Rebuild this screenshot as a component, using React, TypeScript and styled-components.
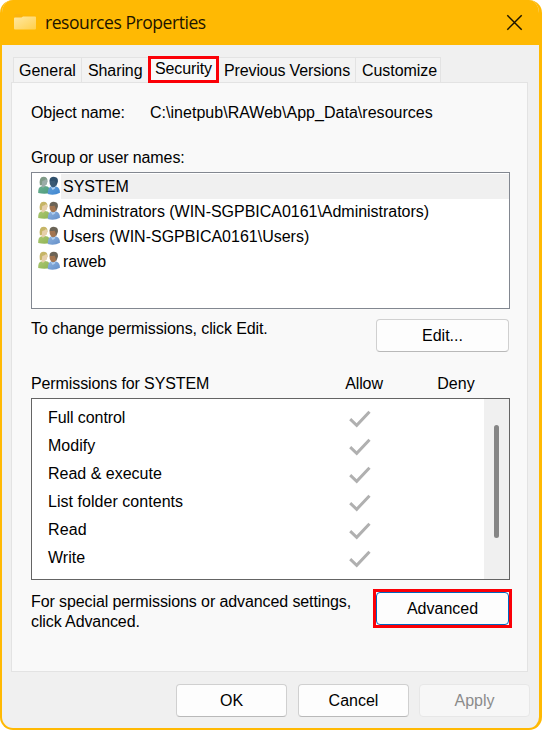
import React from "react";
import styled, { createGlobalStyle } from "styled-components";

const GlobalStyle = createGlobalStyle`
  * { box-sizing: border-box; }
  body { margin: 0; background: #fff; }
`;

const Dialog = styled.div`
  width: 542px;
  height: 730px;
  display: flex;
  flex-direction: column;
  border: solid #ffb903;
  border-width: 0 3px 2px 2px;
  border-radius: 13px;
  background: #f0f0f0;
  overflow: hidden;
  font: 16px/20px "Liberation Sans", Arial, sans-serif;
  color: #000;
`;

const TitleBar = styled.header`
  height: 45px;
  flex: none;
  display: flex;
  align-items: center;
  padding: 0 16px 0 11px;
  background: #ffb903;
`;

const Title = styled.h1<{ $track: number }>`
  flex: 1;
  margin: 0 0 1px 8px;
  font: 400 17.5px/24px "Open Sans", "Noto Sans", sans-serif;
  letter-spacing: ${(p) => p.$track}px;
  color: #1c1400;
`;

const CloseButton = styled.button`
  display: flex;
  padding: 0;
  border: 0;
  background: none;
`;

const Text = styled.span<{ $track?: number }>`
  white-space: pre;
  letter-spacing: ${(p) => p.$track ?? 0}px;
`;

const Tabs = styled.nav`
  height: 37px;
  flex: none;
  display: flex;
  align-items: flex-end;
  padding-left: 11px;
`;

const Tab = styled.div<{ $width: number; $inset: number; $first?: boolean }>`
  width: ${(p) => p.$width}px;
  height: 25px;
  padding: 3px 0 0 ${(p) => p.$inset}px;
  border-top: 1px solid #e3e3e3;
  border-right: 1px solid #e3e3e3;
  border-left: ${(p) => (p.$first ? "1px solid #e3e3e3" : "0")};
  background: #f3f3f3;
`;

const ActiveTab = styled.div`
  position: relative;
  z-index: 1;
  width: 71px;
  height: 27px;
  margin: 0 0 -1px -1px;
  padding-left: 4px;
  border: 3px solid #fb0007;
  background: #f9f9f9;
`;

const Page = styled.main`
  width: 517px;
  height: 590px;
  flex: none;
  margin-left: 9px;
  padding: 20px 17px 0 19px;
  border: 1px solid #e3e3e3;
  background: #f9f9f9;
`;

const ObjectRow = styled.div`
  display: flex;
  height: 45px;
`;

const ObjectLabel = styled.div`
  width: 119px;
`;

const GroupLabel = styled.div`
  height: 24px;
`;

const UserList = styled.ul`
  height: 137px;
  margin: 0;
  padding: 1px 0 0 6px;
  list-style: none;
  border: 1px solid #828790;
  background: #fff;
`;

const UserRow = styled.li`
  display: flex;
  height: 25px;
`;

const UserName = styled.div<{ $selected?: boolean }>`
  flex: 1;
  margin-left: 1px;
  padding: 3px 0 0 2px;
  background: ${(p) => (p.$selected ? "#f0f0f0" : "transparent")};
`;

const EditRow = styled.div`
  display: flex;
  justify-content: space-between;
  height: 65px;
  padding: 10px 1px 0 0;
`;

const Button = styled.button<{ $width: number; $focus?: boolean }>`
  width: ${(p) => p.$width}px;
  height: 33px;
  flex: none;
  padding: 0;
  border: 1px solid ${(p) => (p.$focus ? "#0067c0" : "#d0d0d0")};
  border-bottom-color: ${(p) => (p.$focus ? "#0067c0" : "#b9b9b9")};
  border-radius: 4px;
  background: #fdfdfd;
  color: #000;
  font: inherit;

  &:disabled {
    border-color: #e7e7e7;
    background: #f7f7f7;
    color: #8b8b8b;
  }
`;

const ColumnHeads = styled.div`
  display: grid;
  grid-template-columns: 286px 94px 90px;
  height: 24px;
`;

const Head = styled.div<{ $center?: boolean }>`
  text-align: ${(p) => (p.$center ? "center" : "left")};
`;

const PermissionBox = styled.div`
  display: flex;
  height: 182px;
  border: 1px solid #646464;
  background: #fff;
`;

const PermissionList = styled.div`
  flex: 1;
  padding: 9px 0 0 16px;
`;

const Permission = styled.div`
  display: grid;
  grid-template-columns: 300px 24px;
  height: 28px;
`;

const ScrollTrack = styled.div`
  width: 25px;
  padding: 26px 10px 0;
  background: #f0f0f0;
`;

const ScrollThumb = styled.div`
  width: 5px;
  height: 113px;
  border-radius: 3px;
  background: #868686;
`;

const AdvancedRow = styled.div`
  display: flex;
  justify-content: space-between;
  align-items: flex-start;
  margin-right: -2px;
  padding-top: 9px;
`;

const Hint = styled.div`
  padding-top: 3px;
  display: flex;
  flex-direction: column;
`;

const Highlight = styled.div`
  display: flex;
  border: 3px solid #fb0007;
  background: #fff;
`;

const Footer = styled.footer`
  display: grid;
  grid-template-columns: 122px 121px 111px;
  justify-content: end;
  padding: 12px 9px 0 0;
`;

const FolderIcon = () => (
  <svg width="24" height="20" viewBox="0 0 24 20">
    <defs>
      <linearGradient id="folder" x1="0" y1="0" x2="1" y2="1">
        <stop offset="0" stopColor="#ffe8a2" />
        <stop offset="1" stopColor="#ffcf4b" />
      </linearGradient>
    </defs>
    <path d="M1.500 5V2q0-1 1-1h5.500l2 1.500h11q1 0 1 1V9h-20.500z" fill="#fcb40a" />
    <path d="M1 5.500q0-1 1-1h6.500l1.500-1h12q1 0 1 1V15.500q0 1-1 1H2q-1 0-1-1z" fill="url(#folder)" />
  </svg>
);

const UsersIcon = ({ tinted, id }: { tinted?: boolean; id: string }) => {
  const hair = tinted ? "#7f9a86" : "#c6b566";
  const face = tinted ? "#9aaca8" : "#e6cfab";
  const darkHair = tinted ? "#30506c" : "#6b6457";
  const darkFace = tinted ? "#3b5a74" : "#a37550";
  return (
    <svg width="22" height="24" viewBox="0 0 22 24">
      <defs>
        <linearGradient id={`${id}-green`} x1="0" y1="0" x2="1" y2="1">
          <stop offset="0" stopColor={tinted ? "#6cb092" : "#abc873"} />
          <stop offset="1" stopColor={tinted ? "#4c9b7c" : "#8fb353"} />
        </linearGradient>
        <linearGradient id={`${id}-blue`} x1="0" y1="0" x2="1" y2="1">
          <stop offset="0" stopColor={tinted ? "#62a0da" : "#8fb4df"} />
          <stop offset="1" stopColor={tinted ? "#3f86d0" : "#648fc9"} />
        </linearGradient>
      </defs>
      <path d="M.2 19q-.2-5.300 2.300-6.300l3-1 4 .8q2.500 1.200 2.500 6.500-5.500 1.500-11.800 0z" fill={`url(#${id}-green)`} />
      <path d="M2 11.300Q.5 2.800 5.500 2.800q4.300 0 4 4.700l-1.500 3.500z" fill={hair} />
      <path d="M4.300 7q2.500-.3 3.700-1.900 1.500.9 1.200 3.400-.7 3.300-2.400 3.300v1l-2 1-1.300-1.300z" fill={face} />
      <path d="M9.800 20q-.1-5.500 2.200-7l3-1.200 3.800 1q3 1.200 3.200 6-6 3-12.200 1.200z" fill={`url(#${id}-blue)`} />
      <path d="M11.500 6.500Q11.800 2.800 15.700 2.800q4.800.2 4.200 5l-1.500 4-5-1z" fill={darkHair} />
      <path d="M11.500 7q3 .3 5-.5l1 2 .5 3-1.700 1.800-3-.6Q11.200 11 11.500 7z" fill={darkFace} />
      <path d="M12.200 12.300l2.500 1.500 2.500-1v1.400l-2.500 1.800z" fill="#b4d0ef" />
    </svg>
  );
};

const CheckIcon = () => (
  <svg width="24" height="22" viewBox="0 0 24 22">
    <path d="M2.200 11.200 8.700 17.300 21.500 3.700" fill="none" stroke="#b0b0b0" strokeWidth="3" />
  </svg>
);

const users = [
  { name: "SYSTEM", track: 0 },
  { name: "Administrators (WIN-SGPBICA0161\\Administrators)", track: -0.025 },
  { name: "Users (WIN-SGPBICA0161\\Users)", track: 0 },
  { name: "raweb", track: -0.1 },
];

const permissions = [
  { name: "Full control", track: -0.08 },
  { name: "Modify", track: 0 },
  { name: "Read & execute", track: 0 },
  { name: "List folder contents", track: 0.04 },
  { name: "Read", track: 0.1 },
  { name: "Write", track: 0 },
];

export default function App() {
  return (
    <>
      <GlobalStyle />
      <Dialog>
        <TitleBar>
          <FolderIcon />
          <Title $track={-0.44}>resources Properties</Title>
          <CloseButton aria-label="Close">
            <svg width="17" height="17" viewBox="0 0 17 17">
              <path d="M1.300 1.300 15.700 15.700M15.700 1.300 1.300 15.700" stroke="#1c1400" strokeWidth="1.500" fill="none" />
            </svg>
          </CloseButton>
        </TitleBar>
        <Tabs>
          <Tab $width={69} $inset={5} $first><Text>General</Text></Tab>
          <Tab $width={67} $inset={6}><Text $track={-0.1}>Sharing</Text></Tab>
          <ActiveTab><Text $track={-0.1}>Security</Text></ActiveTab>
          <Tab $width={137} $inset={5}><Text $track={-0.12}>Previous Versions</Text></Tab>
          <Tab $width={85} $inset={6}><Text $track={-0.05}>Customize</Text></Tab>
        </Tabs>
        <Page>
          <ObjectRow>
            <ObjectLabel><Text $track={-0.1}>Object name:</Text></ObjectLabel>
            <Text $track={0.025}>{"C:\\inetpub\\RAWeb\\App_Data\\resources"}</Text>
          </ObjectRow>
          <GroupLabel><Text $track={-0.1}>Group or user names:</Text></GroupLabel>
          <UserList>
            {users.map((user, i) => (
              <UserRow key={user.name}>
                <UsersIcon id={`user${i}`} tinted={i === 0} />
                <UserName $selected={i === 0}><Text $track={user.track}>{user.name}</Text></UserName>
              </UserRow>
            ))}
          </UserList>
          <EditRow>
            <Text $track={-0.1}>To change permissions, click Edit.</Text>
            <Button $width={133}>Edit...</Button>
          </EditRow>
          <ColumnHeads>
            <Head><Text $track={-0.1}>Permissions for SYSTEM</Text></Head>
            <Head $center><Text $track={-0.1}>Allow</Text></Head>
            <Head $center>Deny</Head>
          </ColumnHeads>
          <PermissionBox>
            <PermissionList>
              {permissions.map(({ name, track }) => (
                <Permission key={name}>
                  <Text $track={track}>{name}</Text>
                  <CheckIcon />
                </Permission>
              ))}
            </PermissionList>
            <ScrollTrack><ScrollThumb /></ScrollTrack>
          </PermissionBox>
          <AdvancedRow>
            <Hint>
              <Text $track={-0.1}>For special permissions or advanced settings,</Text>
              <Text $track={-0.1}>click Advanced.</Text>
            </Hint>
            <Highlight><Button $width={133} $focus>Advanced</Button></Highlight>
          </AdvancedRow>
        </Page>
        <Footer>
          <Button $width={111}>OK</Button>
          <Button $width={111}>Cancel</Button>
          <Button $width={111} disabled>Apply</Button>
        </Footer>
      </Dialog>
    </>
  );
}
